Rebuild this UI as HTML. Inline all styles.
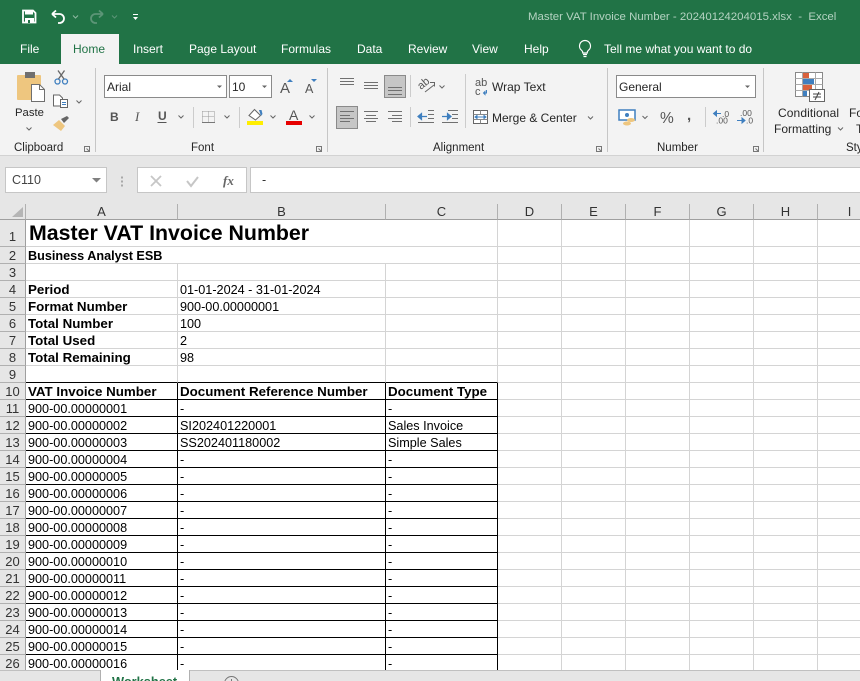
<!DOCTYPE html>
<html><head><meta charset="utf-8"><style>
*{box-sizing:border-box}
html,body{margin:0;padding:0;width:860px;height:681px;overflow:hidden;background:#e6e6e6}
body{position:relative;font-family:"Liberation Sans",sans-serif}
.a{position:absolute;white-space:nowrap}
.t{font-size:12px;color:#262626;line-height:14px}
.tab{top:41px;color:#fff;font-size:12px;line-height:16px}
.sep{position:absolute;width:1px;background:#c6c6c6}
svg{position:absolute;overflow:visible}
.box{position:absolute;background:#fff;border:1px solid #8a8a8a}
.hc{position:absolute;top:204px;height:16px;border-right:1px solid #b0b0b0;border-bottom:1px solid #9f9f9f;background:#e6e6e6;text-align:center;font-size:13px;line-height:15px;color:#333}
table{position:absolute;left:0;top:220px;border-collapse:separate;border-spacing:0;table-layout:fixed;font-size:12.65px;color:#000;width:498px}
td,th{padding:1px 0 0 2px;height:17px;line-height:15px;border-right:1px solid #d4d4d4;border-bottom:1px solid #d4d4d4;overflow:hidden;white-space:nowrap;font-weight:normal;text-align:left;vertical-align:bottom}
td{padding-top:2px;line-height:14px}
th{padding:1px 0 0 0;text-align:center;background:#e6e6e6;border-right:1px solid #9f9f9f;border-bottom:1px solid #b0b0b0;color:#333;font-size:13px}
td.k{border-color:#000}
td.b{font-weight:bold;font-size:13.35px;padding-top:0;line-height:15px}
</style></head><body>
<div class="a" style="left:0;top:0;width:860px;height:64px;background:#217346"></div>
<svg style="left:0;top:0" width="860" height="34" viewBox="0 0 860 34">
<path d="M23 10.500h10l2.500 2.500v9.500h-12.500z" fill="none" stroke="#fff" stroke-width="1.800"/><path d="M25 10h8v4.500h-8zM25 18h9v5h-9z" fill="#fff"/><path d="M28 20h2v3h-2z" fill="#217346"/>
<path d="M52 14l4-3.500M52 14l4 3.500M52 14h7.500a4.500 4.500 0 0 1 0 9h-1.500" fill="none" stroke="#fff" stroke-width="1.800"/>
<path d="M73 15.500l2.500 2.500 2.500-2.500" fill="none" stroke="#8fb9a2" stroke-width="1"/>
<path d="M103 14l-4-3.500M103 14l-4 3.500M103 14h-7.500a4.500 4.500 0 0 0 0 9h1.500" fill="none" stroke="#5c9577" stroke-width="1.800"/>
<path d="M112 15.500l2.500 2.500 2.500-2.500" fill="none" stroke="#5c9577" stroke-width="1"/>
<path d="M133 14h5v1h-5zM133 17h5l-2.500 3z" fill="#fff"/>
</svg>
<div class="a" style="left:528px;top:9.500px;font-size:11.450px;line-height:15px;color:#b5d3c2">Master VAT Invoice Number - 20240124204015.xlsx&nbsp; -&nbsp; Excel</div>
<div class="a" style="left:61px;top:34px;width:58px;height:30px;background:#f3f3f3"></div>
<div class="a tab" style="left:20px">File</div>
<div class="a tab" style="left:73px;color:#217346">Home</div>
<div class="a tab" style="left:133px">Insert</div>
<div class="a tab" style="left:189px">Page Layout</div>
<div class="a tab" style="left:281px">Formulas</div>
<div class="a tab" style="left:357px">Data</div>
<div class="a tab" style="left:408px">Review</div>
<div class="a tab" style="left:472px">View</div>
<div class="a tab" style="left:524px">Help</div>
<svg style="left:575px;top:38px" width="20" height="22"><path d="M10 2.500a5.500 5.500 0 0 0-3.300 9.900c.8.700 1.100 1.500 1.100 2.600h4.400c0-1.100.3-1.900 1.100-2.600A5.500 5.500 0 0 0 10 2.500zM8 16.500h4M8.500 18.500h3" fill="none" stroke="#fff" stroke-width="1.200"/></svg>
<div class="a tab" style="left:604px">Tell me what you want to do</div>

<div class="a" style="left:0;top:64px;width:860px;height:92px;background:#f3f3f3;border-bottom:1px solid #d2d2d2"></div>
<div class="sep" style="left:95px;top:68px;height:84px"></div>
<div class="sep" style="left:327px;top:68px;height:84px"></div>
<div class="sep" style="left:607px;top:68px;height:84px"></div>
<div class="sep" style="left:763px;top:68px;height:84px"></div>

<svg style="left:0;top:64px" width="95" height="92" viewBox="0 64 95 92">
<rect x="17" y="75" width="24" height="25" rx="1" fill="#eec67f"/><rect x="25" y="72" width="10" height="6" fill="#6f6f6f"/>
<path d="M31.500 84.500h8l5 5v12h-13z" fill="#fff" stroke="#6f6f6f"/><path d="M39.500 84.500v5h5" fill="none" stroke="#6f6f6f"/>
<circle cx="57.500" cy="81.500" r="2.500" fill="none" stroke="#3f7fbf" stroke-width="1.300"/><circle cx="65" cy="81.500" r="2.500" fill="none" stroke="#3f7fbf" stroke-width="1.300"/><path d="M58.500 79l6-8.500M64 79l-6-8.500" stroke="#666" stroke-width="1.300"/>
<path d="M53.500 95h6l3 3v8h-9z" fill="#fff" stroke="#666"/><path d="M60.500 99.500h7v8h-7z" fill="#fff" stroke="#666"/><path d="M62 102.500h4M62 104.500h4" stroke="#3f7fbf"/>
<path d="M76.500 100.500l2.500 2.500 2.500-2.500M26.500 127.500l2.500 2.500 2.500-2.500" fill="none" stroke="#666"/>
<path d="M53 125l6-5 6 6-4 5z" fill="#eec67f"/><path d="M61 119l6-3 2 2-5 5z" fill="#666"/>
<path d="M84.500 146.500h5v5h-5zM86.500 148.500l3 3M89.500 149.500v2h-2" fill="none" stroke="#777"/>
</svg>
<div class="a t" style="left:15px;top:106px;font-size:11.300px">Paste</div>
<div class="a t" style="left:14px;top:141px;font-size:11.500px">Clipboard</div>

<div class="box" style="left:104px;top:75px;width:123px;height:23px"></div>
<div class="a t" style="left:107px;top:80px">Arial</div>
<div class="box" style="left:229px;top:75px;width:43px;height:23px"></div>
<div class="a t" style="left:232px;top:80px">10</div>
<svg style="left:96px;top:64px" width="232" height="92" viewBox="96 64 232 92">
<path d="M217 85.500h5l-2.500 2.500zM262 85.500h5l-2.500 2.500z" fill="#666"/>
<text x="280" y="93" font-family="Liberation Sans" font-size="15" fill="#555">A</text><path d="M287 82l3-3 3 3z" fill="#3f7fbf"/>
<text x="305" y="93" font-family="Liberation Sans" font-size="12.500" fill="#555">A</text><path d="M311 79h6l-3 3z" fill="#3f7fbf"/>
<text x="110" y="121" font-family="Liberation Sans" font-size="12" font-weight="bold" fill="#555">B</text>
<text x="135" y="121" font-family="Liberation Serif" font-size="13" font-style="italic" fill="#555">I</text>
<text x="158" y="120" font-family="Liberation Sans" font-size="12" font-weight="bold" fill="#555">U</text><path d="M157.500 122.500h9" stroke="#555"/>
<path d="M178.500 115.500l2.500 2.500 2.500-2.500M224.500 115.500l2.500 2.500 2.500-2.500M270.500 115.500l2.500 2.500 2.500-2.500M309.500 115.500l2.500 2.500 2.500-2.500" fill="none" stroke="#666"/>
<path d="M193.500 107v21M239.500 107v21" stroke="#ccc"/>
<path d="M202.500 111.500h12M202.500 116.500h12M202.500 111.500v11M208.500 111.500v11M214.500 111.500v11" stroke="#999" stroke-dasharray="1 1" fill="none"/><path d="M202 122.500h13" stroke="#777"/>
<path d="M249 115.500l5.500-6 6 6-5 4.500z" fill="#fff" stroke="#666"/><path d="M259 110h2.500l1 4-1.500 2z" fill="#3f7fbf"/>
<rect x="247" y="121" width="16" height="4" fill="#ffee00"/>
<text x="289" y="120" font-family="Liberation Sans" font-size="14" fill="#555">A</text><rect x="286" y="121" width="16" height="4" fill="#e60000"/>
<path d="M316.500 146.500h5v5h-5zM318.500 148.500l3 3M321.500 149.500v2h-2" fill="none" stroke="#777"/>
</svg>
<div class="a t" style="left:191px;top:141px;font-size:11.500px">Font</div>

<svg style="left:328px;top:64px" width="279" height="92" viewBox="328 64 279 92">
<rect x="384.500" y="75.500" width="21" height="22" fill="#c6c6c6" stroke="#8a8a8a"/><rect x="336.500" y="106.500" width="21" height="22" fill="#c6c6c6" stroke="#8a8a8a"/>
<path d="M340 78.500h14M340 81.500h14M340 84.500h14M364 82.500h14M364 85.500h14M364 88.500h14M388 87.500h14M388 90.500h14M388 94.500h14" stroke="#707070"/>
<path d="M340 111.500h14M340 115.500h10M340 118.500h14M340 121.500h10M364 111.500h14M366 115.500h10M364 118.500h14M366 121.500h10M388 111.500h14M392 115.500h10M388 118.500h14M392 121.500h10" stroke="#707070"/>
<path d="M410.500 75v22M410.500 107v20M465.500 74v54" stroke="#ccc"/>
<text x="0" y="0" transform="translate(421 90) rotate(-40)" font-family="Liberation Sans" font-size="11" fill="#555">ab</text><path d="M425 92l9-7M430 82.500h4.500v4" fill="none" stroke="#666"/>
<path d="M439.500 85.500l2.500 2.500 2.500-2.500M588 116.500l2.500 2.500 2.500-2.500" fill="none" stroke="#666"/>
<path d="M428 110.500h6M428 114.500h6M428 118.500h6M418 122.500h16M448 110.500h10M452 114.500h6M452 118.500h6M442 122.500h16" stroke="#707070"/>
<path d="M420 116.500h7M418 116.500l3.500-3v6z" stroke="#3f7fbf" fill="#3f7fbf" stroke-width="1.200"/><path d="M442 116.500h7M451 116.500l-3.500-3v6z" stroke="#3f7fbf" fill="#3f7fbf" stroke-width="1.200"/>
<text x="475" y="86" font-family="Liberation Sans" font-size="11" fill="#555">ab</text><text x="475" y="95" font-family="Liberation Sans" font-size="11" fill="#555">c</text><path d="M486.500 90v3h-3M483.500 93l1.500-1.500v3z" stroke="#3f7fbf" fill="none"/>
<rect x="473.500" y="110.500" width="14" height="13" fill="#fff" stroke="#666"/><path d="M473.500 114.500h14M473.500 119.500h14M480.500 110.500v4M480.500 119.500v4" stroke="#888"/><path d="M475 117h11M475 117l2-1.500v3zM486 117l-2-1.500v3z" stroke="#3f7fbf" fill="none"/>
<path d="M596.500 146.500h5v5h-5zM598.500 148.500l3 3M601.500 149.500v2h-2" fill="none" stroke="#777"/>
</svg>
<div class="a t" style="left:492px;top:80px">Wrap Text</div>
<div class="a t" style="left:492px;top:111px">Merge &amp; Center</div>
<div class="a t" style="left:433px;top:141px;font-size:11.500px">Alignment</div>

<div class="box" style="left:616px;top:75px;width:140px;height:23px"></div>
<div class="a t" style="left:619px;top:80px">General</div>
<svg style="left:608px;top:64px" width="155" height="92" viewBox="608 64 155 92">
<path d="M745 85.500h5l-2.500 2.500z" fill="#666"/>
<rect x="619" y="110" width="16" height="10" fill="#fff" stroke="#3f7fbf" stroke-width="1.500"/><circle cx="627" cy="115" r="2" fill="#3f7fbf"/><ellipse cx="631" cy="120" rx="4" ry="2" fill="#eec67f"/><ellipse cx="627" cy="123.500" rx="4" ry="2" fill="#eec67f"/>
<path d="M642.500 116l2.500 2.500 2.500-2.500" fill="none" stroke="#666"/>
<text x="660" y="123" font-family="Liberation Sans" font-size="15.500" fill="#555">%</text>
<text x="687" y="120" font-family="Liberation Sans" font-size="15" font-weight="bold" fill="#555">,</text>
<path d="M705.500 107v20" stroke="#ccc"/>
<text x="722" y="117" font-family="Liberation Sans" font-size="8.500" fill="#555">.0</text><text x="716" y="123.500" font-family="Liberation Sans" font-size="8.500" fill="#555">.00</text><path d="M715 113.500h6M713.500 113.500l3-2.500v5z" stroke="#3f7fbf" fill="#3f7fbf"/>
<text x="740" y="116" font-family="Liberation Sans" font-size="8.500" fill="#555">.00</text><text x="746" y="123.500" font-family="Liberation Sans" font-size="8.500" fill="#555">.0</text><path d="M737 120.500h6M745 120.500l-3-2.500v5z" stroke="#3f7fbf" fill="#3f7fbf"/>
<path d="M753.500 146.500h5v5h-5zM755.500 148.500l3 3M758.500 149.500v2h-2" fill="none" stroke="#777"/>
</svg>
<div class="a t" style="left:657px;top:141px;font-size:11.500px">Number</div>

<svg style="left:764px;top:64px" width="96" height="92" viewBox="764 64 96 92">
<rect x="795.500" y="72.500" width="27" height="24" fill="#fff" stroke="#888"/><path d="M795.500 78.500h27M795.500 84.500h27M795.500 90.500h27M802.500 72.500v24M815.500 72.500v24" stroke="#aaa"/>
<rect x="803" y="73" width="6" height="5" fill="#d8613c"/><rect x="803" y="79" width="11" height="5" fill="#3f7fbf"/><rect x="803" y="85" width="9" height="5" fill="#d8613c"/><rect x="803" y="91" width="4" height="5" fill="#3f7fbf"/>
<rect x="809.500" y="89.500" width="15" height="12" fill="#fff" stroke="#666"/><path d="M813 94h8M813 97h8M815 100l4-8" stroke="#444" fill="none"/>
<path d="M838 127.500l2.500 2.500 2.500-2.500" fill="none" stroke="#666"/>
</svg>
<div class="a t" style="left:778px;top:106px;letter-spacing:.1px">Conditional</div>
<div class="a t" style="left:774px;top:122px">Formatting</div>
<div class="a t" style="left:849px;top:106px">Fo</div>
<div class="a t" style="left:856px;top:122px">T</div>
<div class="a t" style="left:846px;top:141px;font-size:11.500px">Sty</div>

<div class="a" style="left:5px;top:167px;width:102px;height:26px;background:#fff;border:1px solid #c6c6c6"></div>
<div class="a" style="left:12px;top:173px;font-size:12.500px;line-height:15px;color:#444">C110</div>
<svg style="left:90px;top:175px" width="40" height="12" viewBox="90 175 40 12">
<path d="M92 178h9l-4.500 4.500z" fill="#808080"/>
<path d="M122 176.500v2M122 180.500v2M122 184.500v2" stroke="#a8a8a8" stroke-width="2"/>
</svg>
<div class="a" style="left:137px;top:167px;width:110px;height:26px;background:#fff;border:1px solid #c6c6c6"></div>
<svg style="left:140px;top:170px" width="110" height="22" viewBox="140 170 110 22">
<path d="M151 176l10 10M161 176l-10 10" stroke="#c6c6c6" stroke-width="1.800" fill="none"/>
<path d="M187 181l4 5 7-9" stroke="#c6c6c6" stroke-width="2" fill="none"/>
<text x="223" y="185" font-family="Liberation Serif" font-size="13" font-style="italic" font-weight="bold" fill="#666">fx</text>
</svg>
<div class="a" style="left:250px;top:167px;width:620px;height:26px;background:#fff;border:1px solid #c6c6c6"></div>
<div class="a" style="left:262px;top:173px;font-size:12.500px;line-height:15px;color:#333">-</div>

<div class="a" style="left:0;top:204px;width:26px;height:16px;background:#e6e6e6;border-right:1px solid #b0b0b0;border-bottom:1px solid #9f9f9f"></div>
<svg style="left:11px;top:206px" width="13" height="12"><path d="M12 1v10H1z" fill="#b5b5b5"/></svg>
<div class="hc" style="left:26px;width:152px">A</div>
<div class="hc" style="left:178px;width:208px">B</div>
<div class="hc" style="left:386px;width:112px">C</div>
<div class="hc" style="left:498px;width:64px">D</div>
<div class="hc" style="left:562px;width:64px">E</div>
<div class="hc" style="left:626px;width:64px">F</div>
<div class="hc" style="left:690px;width:64px">G</div>
<div class="hc" style="left:754px;width:64px">H</div>
<div class="hc" style="left:818px;width:64px">I</div>

<div class="a" style="left:26px;top:220px;width:834px;height:450px;background:#fff"></div>
<div class="a" style="left:498px;top:220px;width:362px;height:450px;background-color:#fff;background-image:linear-gradient(#d4d4d4,#d4d4d4),repeating-linear-gradient(to bottom,transparent 0,transparent 16px,#d4d4d4 16px,#d4d4d4 17px),repeating-linear-gradient(to right,transparent 0,transparent 63px,#d4d4d4 63px,#d4d4d4 64px);background-size:100% 1px,100% 100%,100% 100%;background-position:0 26px,0 27px,0 0;background-repeat:no-repeat,no-repeat,no-repeat"></div>
<table>
<colgroup><col style="width:26px"><col style="width:152px"><col style="width:208px"><col style="width:112px"></colgroup>
<tr><th style="height:27px;line-height:19px;padding:0">1</th><td colspan="3" style="height:27px;font-size:21.330px;font-weight:bold;padding:0 0 0 3px;line-height:26px">Master VAT Invoice Number</td></tr>
<tr><th>2</th><td colspan="3" style="font-weight:bold">Business Analyst ESB</td></tr>
<tr><th>3</th><td></td><td></td><td></td></tr>
<tr><th>4</th><td class="b">Period</td><td>01-01-2024 - 31-01-2024</td><td></td></tr>
<tr><th>5</th><td class="b">Format Number</td><td>900-00.00000001</td><td></td></tr>
<tr><th>6</th><td class="b">Total Number</td><td>100</td><td></td></tr>
<tr><th>7</th><td class="b">Total Used</td><td>2</td><td></td></tr>
<tr><th>8</th><td class="b">Total Remaining</td><td>98</td><td></td></tr>
<tr><th>9</th><td style="border-bottom-color:#000"></td><td style="border-bottom-color:#000"></td><td style="border-bottom-color:#000"></td></tr>
<tr><th>10</th><td class="k b">VAT Invoice Number</td><td class="k b">Document Reference Number</td><td class="k b">Document Type</td></tr>
<tr><th>11</th><td class="k">900-00.00000001</td><td class="k">-</td><td class="k">-</td></tr>
<tr><th>12</th><td class="k">900-00.00000002</td><td class="k">SI202401220001</td><td class="k">Sales Invoice</td></tr>
<tr><th>13</th><td class="k">900-00.00000003</td><td class="k">SS202401180002</td><td class="k">Simple Sales</td></tr>
<tr><th>14</th><td class="k">900-00.00000004</td><td class="k">-</td><td class="k">-</td></tr>
<tr><th>15</th><td class="k">900-00.00000005</td><td class="k">-</td><td class="k">-</td></tr>
<tr><th>16</th><td class="k">900-00.00000006</td><td class="k">-</td><td class="k">-</td></tr>
<tr><th>17</th><td class="k">900-00.00000007</td><td class="k">-</td><td class="k">-</td></tr>
<tr><th>18</th><td class="k">900-00.00000008</td><td class="k">-</td><td class="k">-</td></tr>
<tr><th>19</th><td class="k">900-00.00000009</td><td class="k">-</td><td class="k">-</td></tr>
<tr><th>20</th><td class="k">900-00.00000010</td><td class="k">-</td><td class="k">-</td></tr>
<tr><th>21</th><td class="k">900-00.00000011</td><td class="k">-</td><td class="k">-</td></tr>
<tr><th>22</th><td class="k">900-00.00000012</td><td class="k">-</td><td class="k">-</td></tr>
<tr><th>23</th><td class="k">900-00.00000013</td><td class="k">-</td><td class="k">-</td></tr>
<tr><th>24</th><td class="k">900-00.00000014</td><td class="k">-</td><td class="k">-</td></tr>
<tr><th>25</th><td class="k">900-00.00000015</td><td class="k">-</td><td class="k">-</td></tr>
<tr><th>26</th><td class="k">900-00.00000016</td><td class="k">-</td><td class="k">-</td></tr>
</table>

<div class="a" style="left:0;top:670px;width:860px;height:11px;background:#e6e6e6;border-top:1px solid #c0c0c0"></div>
<div class="a" style="left:100px;top:670px;width:90px;height:11px;background:#fff;border-left:1px solid #b0b0b0;border-right:1px solid #b0b0b0"></div>
<div class="a" style="left:112px;top:675px;font-size:12.800px;font-weight:bold;line-height:14px;color:#217346">Worksheet</div>
<svg style="left:222px;top:675px" width="20" height="6"><circle cx="9.500" cy="8.500" r="7" fill="none" stroke="#777"/><path d="M9.500 4v6" stroke="#777"/></svg>
</body></html>
